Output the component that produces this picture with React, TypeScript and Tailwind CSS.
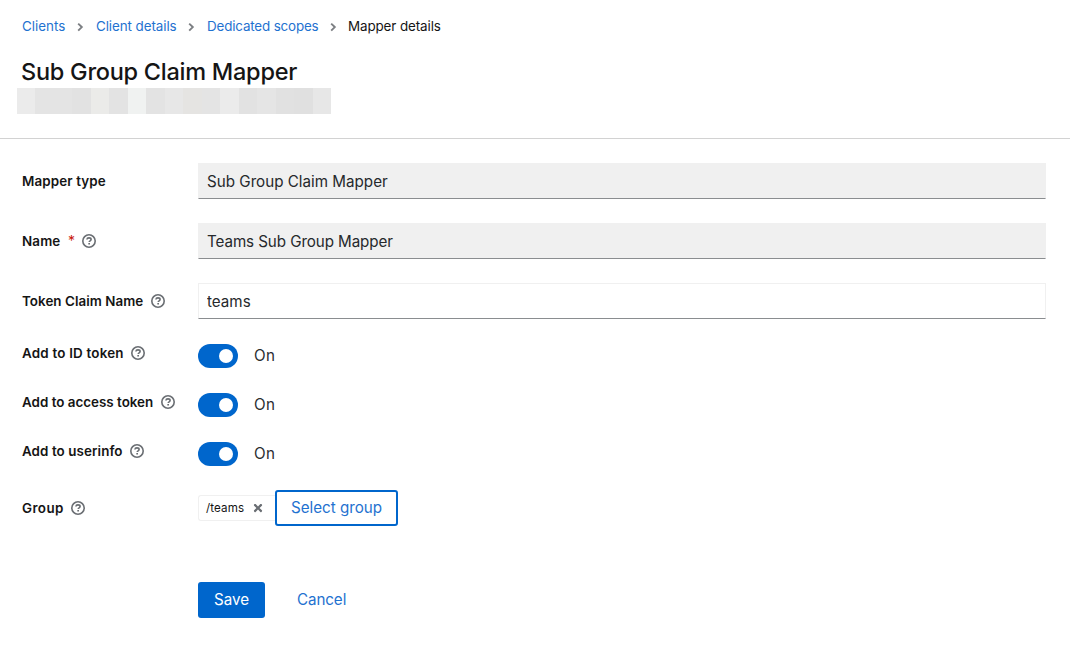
import type { ReactNode } from "react";
import { FaTimes } from "react-icons/fa";

const redacted: [string, string][] = [
  ["w-[18px]", "bg-[#ebebeb]"],
  ["w-[37px]", "bg-[#e4e4e4]"],
  ["w-[19px]", "bg-[#e2e2e2]"],
  ["w-[18px]", "bg-[#ebebe9]"],
  ["w-[19px]", "bg-[#e3e3e3]"],
  ["w-[18px]", "bg-[#f0f2f1]"],
  ["w-[19px]", "bg-[#e3e3e3]"],
  ["w-[18px]", "bg-[#e7e7e7]"],
  ["w-[19px]", "bg-[#e5e4e2]"],
  ["w-[18px]", "bg-[#e4e4e4]"],
  ["w-[19px]", "bg-[#ebebeb]"],
  ["w-[18px]", "bg-[#e2e2e2]"],
  ["w-[19px]", "bg-[#e5e5e5]"],
  ["w-[18px]", "bg-[#e1e1e1]"],
  ["w-[19px]", "bg-[#e0e0e0]"],
  ["w-[18px]", "bg-[#e7e7e7]"],
];

function HelpIcon() {
  return (
    <svg viewBox="0 0 14 14" className="h-3.5 w-3.5 shrink-0 text-[#6a6e73]" fill="none" stroke="currentColor">
      <circle cx="7" cy="7" r="6.2" strokeWidth="1.6" />
      <path d="M4.9 5.5C5 4.4 5.9 3.9 7 3.9s2.1.6 2.1 1.6c0 1.3-1.9 1.3-1.9 2.6" strokeWidth="1.6" />
      <path d="M7.15 9v1.6" strokeWidth="1.7" />
    </svg>
  );
}

function Label({ children, width, required, help = true, low }: { children: ReactNode; width: string; required?: boolean; help?: boolean; low?: boolean }) {
  return (
    <div className="flex h-[21px] items-center text-[13.4px] font-semibold text-[#151515]">
      <span className={`${width} ${low ? "pt-0.5" : ""} shrink-0 whitespace-nowrap`}>{children}</span>
      {required && <span className="w-[18px] shrink-0 pl-1 text-sm font-normal text-[#c9190b]">*</span>}
      {help && <HelpIcon />}
    </div>
  );
}

function TextField({ value, className }: { value: string; className: string }) {
  return (
    <input
      readOnly
      defaultValue={value}
      className={`h-9 w-full border border-[#f0f0f0] border-b-[#8a8d90] px-2 text-[15.2px] text-[#26292c] outline-none ${className}`}
    />
  );
}

function Toggle() {
  return (
    <div className="flex h-6 items-center gap-4">
      <button type="button" className="flex h-6 w-10 items-center justify-end rounded-full bg-[#0066cc] pr-[5px]">
        <span className="h-3.5 w-3.5 rounded-full bg-white" />
      </button>
      <span className="text-[15.2px] tracking-[0.4px] text-[#2b2e31]">On</span>
    </div>
  );
}

function Crumb({ children, width }: { children: string; width: string }) {
  return (
    <>
      <a className={`${width} shrink-0 text-[#1f72d0]`}>{children}</a>
      <svg viewBox="0 0 10 12" className="ml-[9px] mr-[11px] h-3 w-[10px] shrink-0 text-[#7c7f83]" fill="none" stroke="currentColor" strokeWidth="1.9">
        <path d="M3.2 2.6 6.8 6.1 3.2 9.6" />
      </svg>
    </>
  );
}

const row = "grid grid-cols-[176px_848px]";

export default function App() {
  return (
    <div className="min-h-[659px] bg-white font-['Inter',sans-serif] text-[#151515]">
      <header className="h-[139px] border-b border-[#d2d2d2] pt-4">
        <nav className="flex h-[21px] items-center whitespace-nowrap pl-[22px] text-[13.4px]">
          <Crumb width="w-[44px]">Clients</Crumb>
          <Crumb width="w-[81px] tracking-[-0.08px]">Client details</Crumb>
          <Crumb width="w-[112px] tracking-[-0.16px]">Dedicated scopes</Crumb>
          <span className="-ml-px tracking-[-0.1px]">Mapper details</span>
        </nav>
        <h1 className="mt-[18px] h-[33px] pl-[21px] text-[23.5px] leading-[33px] font-[450] tracking-[-0.26px]">Sub Group Claim Mapper</h1>
        <div className="ml-[17px] flex h-[26px]">
          {redacted.map(([w, bg], i) => (
            <span key={i} className={`${w} ${bg}`} />
          ))}
        </div>
      </header>
      <form className="pl-[22px] pt-6">
        <div className="flex flex-col gap-6">
          <div className={`${row} items-center`}>
            <Label width="w-[90px] tracking-[0.12px]" help={false}>Mapper type</Label>
            <TextField value="Sub Group Claim Mapper" className="bg-[#f0f0f0]" />
          </div>
          <div className={`${row} items-center`}>
            <Label width="w-[42px] tracking-[0.15px]" required>Name</Label>
            <TextField value="Teams Sub Group Mapper" className="bg-[#f0f0f0] tracking-[-0.09px]" />
          </div>
          <div className={`${row} items-center`}>
            <Label width="w-[129px] tracking-[0.04px]">Token Claim Name</Label>
            <TextField value="teams" className="bg-white" />
          </div>
        </div>
        <div className="mt-[23px] flex flex-col gap-[23px]">
          <div className={row}>
            <Label low width="w-[109px] tracking-[0.2px]">Add to ID token</Label>
            <div className="pt-0.5"><Toggle /></div>
          </div>
          <div className={row}>
            <Label low width="w-[139px]">Add to access token</Label>
            <div className="pt-0.5"><Toggle /></div>
          </div>
          <div className={row}>
            <Label low width="w-[108px] tracking-[0.08px]">Add to userinfo</Label>
            <div className="pt-0.5"><Toggle /></div>
          </div>
        </div>
        <div className={`${row} mt-6 items-center`}>
          <Label width="w-[49px] tracking-[0.4px]">Group</Label>
          <div className="flex items-center">
            <span className="flex h-[26px] w-[77px] items-center rounded-l-[3px] border border-r-0 border-[#f0f0f0] pl-[7px] text-[11.6px] text-[#151515]">
              <span className="w-[46px] pt-0.5 tracking-[0.1px]">/teams</span>
              <FaTimes className="h-3 w-3 text-[#6a6e73]" />
            </span>
            <button type="button" className="h-9 w-[123px] rounded-[3px] border-2 border-[#0066cc] text-[15.2px] text-[#1f72d0]">
              Select group
            </button>
          </div>
        </div>
        <div className="mt-14 flex pl-44 text-[15.2px]">
          <button type="button" className="h-9 w-[67px] rounded-[3px] bg-[#0066cc] text-white">Save</button>
          <button type="button" className="ml-4 h-9 px-4 tracking-[-0.1px] text-[#1f72d0]">Cancel</button>
        </div>
      </form>
    </div>
  );
}
